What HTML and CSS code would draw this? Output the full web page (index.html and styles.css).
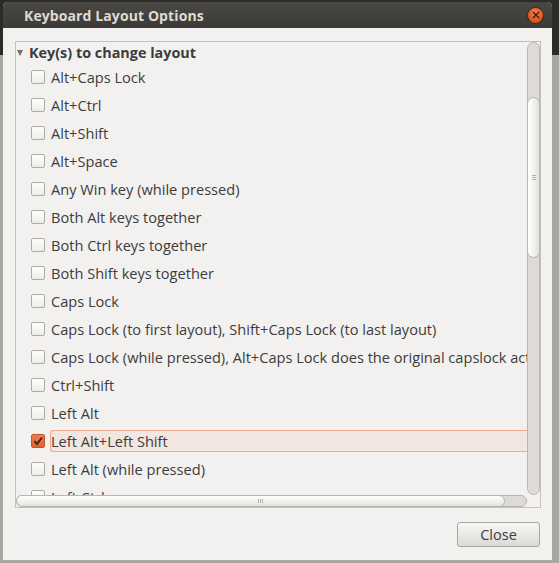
FILE: index.html
```html
<!DOCTYPE html>
<html>
<head>
<meta charset="utf-8">
<link rel="stylesheet" href="styles.css">
</head>
<body>
<div class="desktop">
  <div class="window">
    <div class="titlebar">
      <span class="title">Keyboard Layout Options</span>
      <span class="wclose"><svg width="8" height="8" viewBox="0 0 8 8"><path d="M1 1L7 7M7 1L1 7" stroke="#3a1a0c" stroke-width="1.4"/></svg></span>
    </div>
    <div class="content">
      <div class="frame">
        <div class="view">
          <div class="tree">
            <div class="header"><span class="tri"></span><span>Key(s) to change layout</span></div>
            <div class="row"><span class="cb"></span><span class="lbl">Alt+Caps Lock</span></div>
            <div class="row"><span class="cb"></span><span class="lbl">Alt+Ctrl</span></div>
            <div class="row"><span class="cb"></span><span class="lbl">Alt+Shift</span></div>
            <div class="row"><span class="cb"></span><span class="lbl">Alt+Space</span></div>
            <div class="row"><span class="cb"></span><span class="lbl">Any Win key (while pressed)</span></div>
            <div class="row"><span class="cb"></span><span class="lbl">Both Alt keys together</span></div>
            <div class="row"><span class="cb"></span><span class="lbl">Both Ctrl keys together</span></div>
            <div class="row"><span class="cb"></span><span class="lbl">Both Shift keys together</span></div>
            <div class="row"><span class="cb"></span><span class="lbl">Caps Lock</span></div>
            <div class="row"><span class="cb"></span><span class="lbl">Caps Lock (to first layout), Shift+Caps Lock (to last layout)</span></div>
            <div class="row"><span class="cb"></span><span class="lbl">Caps Lock (while pressed), Alt+Caps Lock does the original capslock action</span></div>
            <div class="row"><span class="cb"></span><span class="lbl">Ctrl+Shift</span></div>
            <div class="row"><span class="cb"></span><span class="lbl">Left Alt</span></div>
            <div class="row selected"><span class="cb checked"><svg width="12" height="12" viewBox="0 0 12 12"><path d="M2.5 6.2L5 9L10 2.5" fill="none" stroke="#4a2418" stroke-width="2"/></svg></span><span class="lbl">Left Alt+Left Shift</span></div>
            <div class="row"><span class="cb"></span><span class="lbl">Left Alt (while pressed)</span></div>
            <div class="row"><span class="cb"></span><span class="lbl">Left Ctrl</span></div>
          </div>
          <div class="vscroll"><div class="vthumb"><span class="vgrip"></span></div></div>
        </div>
        <div class="hbar">
          <div class="hscroll"><div class="hthumb"><span class="hgrip"></span></div></div>
          <div class="corner"></div>
        </div>
      </div>
      <div class="actions"><button class="btn">Close</button></div>
    </div>
  </div>
</div>
</body>
</html>
```
FILE: styles.css
```css
html, body {
  margin: 0;
  padding: 0;
}
body {
  width: 559px;
  height: 563px;
  overflow: hidden;
  background: linear-gradient(#2c2b28 0, #2c2b28 55px, #a9a7a3 55px, #a9a7a3 100%);
  font-family: "Open Sans", "DejaVu Sans", sans-serif;
}
.desktop {
  padding: 2px 0 0 3px;
}
.window {
  width: 549px;
  height: 558px;
  background: #f2f1f0;
  border-radius: 5px 5px 0 0;
  display: flex;
  flex-direction: column;
  overflow: hidden;
}
.titlebar {
  height: 26px;
  flex: none;
  background: linear-gradient(#4a4843, #3c3b37);
  display: flex;
  align-items: center;
  padding-left: 21px;
  padding-right: 9px;
}
.title {
  flex: 1;
  color: #dfdbd2;
  font-weight: bold;
  font-size: 14px;
  letter-spacing: 0.1px;
}
.wclose {
  width: 15px;
  height: 15px;
  border-radius: 50%;
  background: radial-gradient(circle at 50% 35%, #f5834d, #df4f1c 70%, #c4420f);
  display: flex;
  align-items: center;
  justify-content: center;
  box-shadow: 0 0 0 1px rgba(0,0,0,0.25);
}
.content {
  flex: 1;
  padding: 13px 11px 0 12px;
  display: flex;
  flex-direction: column;
}
.frame {
  border: 1px solid #c4c1bc;
  height: 465px;
  display: flex;
  flex-direction: column;
}
.view {
  display: flex;
  height: 453px;
}
.tree {
  flex: 1;
  overflow: hidden;
  font-size: 14.6px;
  color: #3c3c3c;
}
.header {
  height: 21px;
  display: flex;
  align-items: center;
  font-weight: bold;
  font-size: 14.4px;
  color: #3c3c3c;
  white-space: nowrap;
}
.tri {
  width: 0;
  height: 0;
  margin-left: 1px;
  margin-right: 6px;
  border-left: 3.5px solid transparent;
  border-right: 3.5px solid transparent;
  border-top: 6px solid #707070;
  margin-top: 1px;
}
.row {
  height: 28px;
  display: flex;
  align-items: center;
  padding-left: 15px;
  white-space: nowrap;
}
.cb {
  flex: none;
  width: 12px;
  height: 12px;
  border: 1px solid #aeaba6;
  border-radius: 2px;
  background: linear-gradient(#fdfdfc, #eeedeb);
  margin-right: 5px;
  display: flex;
  align-items: center;
  justify-content: center;
}
.cb.checked {
  background: linear-gradient(#f07e50, #e0602f);
  border-color: #c3552c;
}
.lbl {
  display: flex;
  align-items: center;
  height: 20px;
  padding-left: 0;
  border: 1px solid transparent;
}
.selected .lbl {
  flex: 1;
  background: #f3e5e0;
  border-color: #f1a88d;
  border-right: none;
  border-radius: 3px 0 0 3px;
}
.vscroll {
  width: 13px;
  flex: none;
  background: #dcdbd9;
  border: 1px solid #b9b6b1;
  border-radius: 7px;
  box-sizing: border-box;
  padding-top: 54px;
}
.vthumb {
  height: 159px;
  margin: 0 -1px;
  border: 1px solid #b9b6b1;
  border-radius: 7px;
  background: linear-gradient(90deg, #ffffff, #f0efee 60%, #e2e1df);
  display: flex;
  align-items: center;
  justify-content: center;
}
.vgrip {
  width: 4px;
  height: 6px;
  background: repeating-linear-gradient(#b6b3ae 0 1px, transparent 1px 2px);
}
.hbar {
  display: flex;
  height: 12px;
}
.hscroll {
  flex: 1;
  background: #dcdbd9;
  border: 1px solid #b9b6b1;
  border-radius: 7px;
  display: flex;
}
.hthumb {
  width: 487px;
  margin: -1px 0 -1px -1px;
  border: 1px solid #b9b6b1;
  border-radius: 7px;
  background: linear-gradient(#ffffff, #f0efee 60%, #e2e1df);
  display: flex;
  align-items: center;
  justify-content: center;
}
.hgrip {
  width: 6px;
  height: 4px;
  background: repeating-linear-gradient(90deg, #b6b3ae 0 1px, transparent 1px 2px);
}
.corner {
  width: 13px;
  flex: none;
}
.actions {
  display: flex;
  justify-content: flex-end;
  margin-top: 14px;
  padding-right: 1px;
}
.btn {
  width: 83px;
  height: 25px;
  border: 1px solid #a8a6a2;
  border-radius: 3px;
  background: linear-gradient(#f8f7f6, #dcdad7);
  font-family: "Open Sans", "DejaVu Sans", sans-serif;
  font-size: 14.5px;
  color: #3c3c3c;
  padding: 0;
}
```
